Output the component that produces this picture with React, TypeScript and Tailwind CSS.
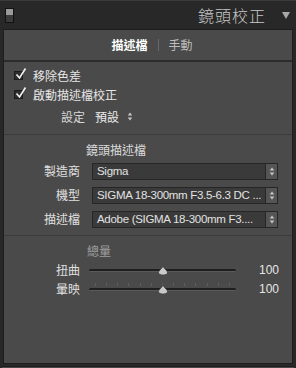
import type { FC } from 'react';

const font = { fontFamily: '"Noto Sans CJK TC", "Noto Sans", sans-serif' };
const latin = { fontFamily: '"Liberation Sans", Arial, sans-serif' };

const Check: FC<{ label: string }> = ({ label }) => (
  <div className="flex h-[19px] items-center pl-[10px]">
    <div className="relative h-[9px] w-[9px] border border-[#1c1c1c] bg-[#2e2e2e]">
      <svg
        viewBox="0 0 12 12"
        className="absolute -top-[4px] left-[0px] h-[12px] w-[12px]"
        fill="none"
        stroke="#f2f2f2"
        strokeWidth="1.6"
      >
        <path d="M1.5 6.5 L4.5 10 L10.5 0.5" />
      </svg>
    </div>
    <span className="ml-[10px] text-[12px] text-[#e6e6e6]">{label}</span>
  </div>
);

const UpDown: FC = () => (
  <svg viewBox="0 0 6 10" className="h-[9px] w-[6px]" fill="#c8c8c8">
    <path d="M3 0.5 L5.5 3.8 L0.5 3.8 Z" />
    <path d="M3 9.5 L5.5 6.2 L0.5 6.2 Z" />
  </svg>
);

const SelectRow: FC<{ label: string; value: string }> = ({ label, value }) => (
  <div className="flex h-[24px] items-center">
    <span className="w-[76px] text-right text-[12px] text-[#e0e0e0]">{label}</span>
    <div className="ml-[12px] flex h-[17px] w-[186px] items-stretch border border-[#262626] bg-[#3a3a3a]">
      <span
        className="min-w-0 flex-1 pl-[4px] text-[11.5px] leading-[15px] tracking-[-0.3px] whitespace-nowrap text-[#e2e2e2]"
        style={latin}
      >
        {value}
      </span>
      <div className="flex w-[12px] shrink-0 items-center justify-center border-l border-[#262626] bg-[#555555]">
        <UpDown />
      </div>
    </div>
  </div>
);

const Slider: FC<{ label: string; value: number; ticks?: boolean }> = ({
  label,
  value,
  ticks,
}) => (
  <div className="flex h-[19px] items-center">
    <span className="w-[76px] text-right text-[12px] text-[#e0e0e0]">{label}</span>
    <div className="relative ml-[9px] h-[19px] w-[147px]">
      {ticks && (
        <div className="absolute top-[4px] right-[6px] left-[6px] flex justify-between">
          {Array.from({ length: 13 }).map((_, i) => (
            <div key={i} className="h-[3px] w-px bg-[#5e5e5e]" />
          ))}
        </div>
      )}
      <div className="absolute top-[9px] right-0 left-0 h-[3px] rounded-full border-b border-[#5a5a5a] bg-[#1f1f1f]" />
      <svg
        viewBox="0 0 10 9"
        className="absolute top-[6px] left-[69px] h-[9px] w-[10px]"
      >
        <path d="M5 0 C6 3 9.5 4.5 9.5 6.5 C9.5 8 8 9 5 9 C2 9 0.5 8 0.5 6.5 C0.5 4.5 4 3 5 0 Z" fill="#c9c9c9" stroke="#2a2a2a" strokeWidth="0.6" />
      </svg>
    </div>
    <span className="ml-auto pr-[13px] text-[12px] text-[#e6e6e6]" style={latin}>
      {value}
    </span>
  </div>
);

const App: FC = () => (
  <div
    className="flex h-[368px] w-[296px] flex-col overflow-hidden bg-[#282828]"
    style={font}
  >
    <div className="flex h-[29px] shrink-0 items-center border-t border-[#3a3a3a]">
      <div className="ml-[5px] flex h-[15px] w-[9px] flex-col border border-[#111] bg-[#3b3b3b]">
        <div className="h-[6px] bg-[#9a9a9a]" />
      </div>
      <span className="ml-auto text-[16px] font-light tracking-[1px] text-[#c8c8c8]">鏡頭校正</span>
      <svg viewBox="0 0 8 7" className="mr-[6px] ml-[16px] h-[7px] w-[8px]">
        <path d="M0 0 H8 L4 7 Z" fill="#a8a8a8" />
      </svg>
    </div>

    <div className="mx-[3px] flex h-[335px] shrink-0 flex-col border border-[#1e1e1e] bg-[#4a4a4a]">
      <div className="flex h-[32px] shrink-0 items-center justify-center border-b-2 border-[#2c2c2c]">
        <span className="ml-[8px] text-[12px] font-bold text-white">描述檔</span>
        <span className="mx-[10px] h-[12px] w-px bg-[#6a6a6a]" />
        <span className="text-[12px] text-[#bdbdbd]">手動</span>
      </div>

      <div className="flex flex-col pt-[4px]">
        <Check label="移除色差" />
        <Check label="啟動描述檔校正" />
        <div className="flex h-[25px] items-center pl-[57px]">
          <span className="text-[12px] text-[#d8d8d8]">設定</span>
          <span className="ml-[10px] text-[12px] text-[#ececec]">預設</span>
          <span className="ml-[8px]">
            <UpDown />
          </span>
        </div>
      </div>

      <div className="mt-[5px] border-t border-[#3c3c3c]" />

      <div className="flex flex-col pt-[6px]">
        <span className="h-[18px] pl-[82px] text-[12px] leading-[18px] text-[#dcdcdc]">鏡頭描述檔</span>
        <SelectRow label="製造商" value="Sigma" />
        <SelectRow label="機型" value="SIGMA 18-300mm F3.5-6.3 DC ..." />
        <SelectRow label="描述檔" value="Adobe (SIGMA 18-300mm F3...." />
      </div>

      <div className="mt-[4px] border-t border-[#3c3c3c]" />

      <div className="flex flex-col pt-[6px]">
        <span className="h-[18px] pl-[83px] text-[12px] leading-[18px] text-[#9e9e9e]">總量</span>
        <Slider label="扭曲" value={100} />
        <Slider label="暈映" value={100} ticks />
      </div>
    </div>

    <div className="mx-[2px] mt-[2px] h-[10px] border-t border-[#1e1e1e] bg-[#4a4a4a]" />
  </div>
);

export default App;
